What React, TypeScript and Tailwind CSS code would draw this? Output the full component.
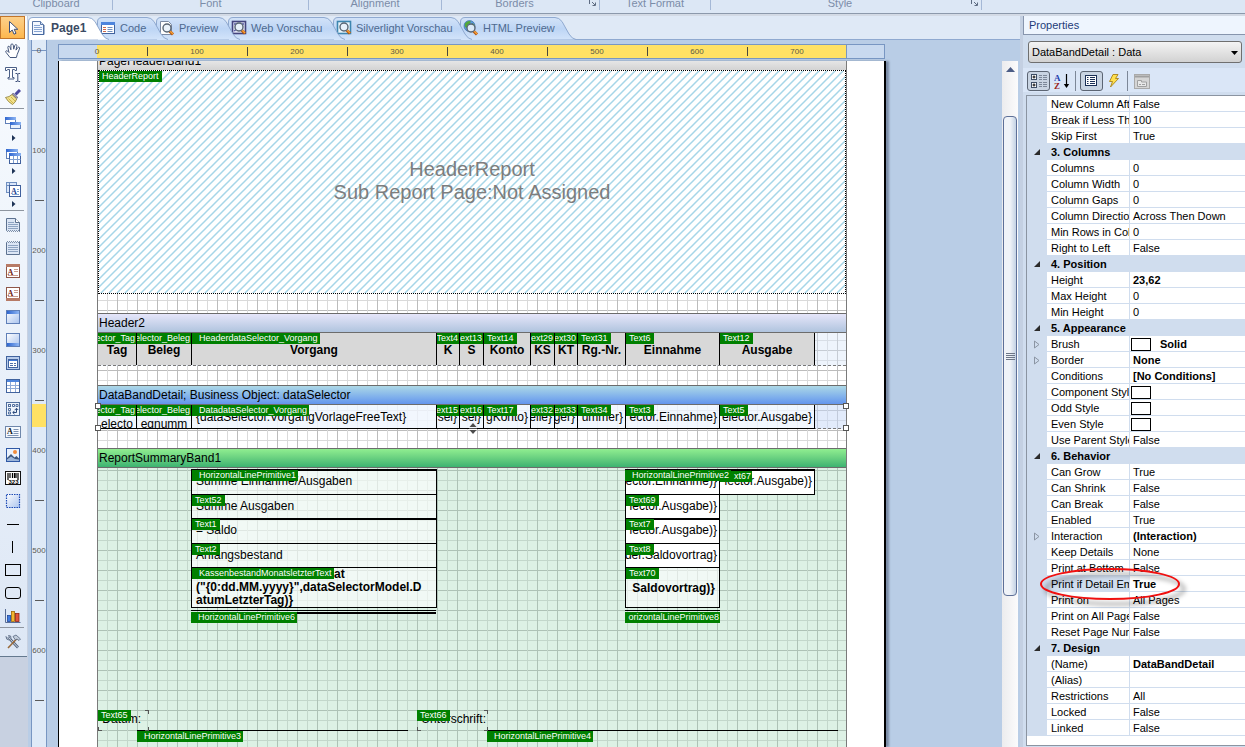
import type { ReactNode } from "react";

/* ---------- icons ---------- */

function Icon({ children, className = "" }: { children: ReactNode; className?: string }) {
  return (
    <svg width="16" height="16" viewBox="0 0 16 16" aria-hidden="true" className={"shrink-0 " + className}>
      {children}
    </svg>
  );
}

const Defs = () => (
  <svg width="0" height="0" className="absolute" aria-hidden="true">
    <defs>
      <linearGradient id="blueTop" x1="0" y1="0" x2="1" y2="1">
        <stop offset="0" stopColor="#ffffff" />
        <stop offset="1" stopColor="#a9c3ee" />
      </linearGradient>
      <linearGradient id="bar" x1="0" y1="0" x2="1" y2="0">
        <stop offset="0" stopColor="#2f66cf" />
        <stop offset="1" stopColor="#8db5f3" />
      </linearGradient>
      <linearGradient id="tabFill" x1="0" y1="0" x2="0" y2="1">
        <stop offset="0" stopColor="#d3e3f8" />
        <stop offset="0.5" stopColor="#bdd5f5" />
        <stop offset="1" stopColor="#d3e4fa" />
      </linearGradient>
    </defs>
  </svg>
);

const Lens = ({ x = 8, y = 7 }: { x?: number; y?: number }) => (
  <g>
    <path d={`M${x + 2.5} ${y + 3} L${x + 6} ${y + 6.5}`} stroke="#b4560c" strokeWidth="3" />
    <path d={`M${x + 3} ${y + 3} L${x + 6} ${y + 6}`} stroke="#f7a13a" strokeWidth="1.4" />
    <circle cx={x} cy={y} r="4" fill="#e9f2fb" fillOpacity="0.9" stroke="#596573" strokeWidth="1.4" />
  </g>
);

const PointerIcon = () => (
  <Icon>
    <path d="M4.500 1.500v11l2.700-2.500 1.800 4.200 2-.9-1.800-4h3.600z" fill="#fff" stroke="#3d4f78" />
  </Icon>
);
const HandIcon = () => (
  <Icon>
    <path
      d="M5 14.500 1 9.300q-.8-1.300.5-1.600 1.200 0 2.500 1.800L2.800 4.300q0-1.300 1.200-1.100.9.300 1.900 3.600L5.900 2q.2-1.200 1.200-1.100 1 .2 1.200 1.300l.4 4L9.900 2.300q.5-1 1.400-.700.8.500.5 1.700l-.8 3.800 1.800-2.500q.8-.8 1.500-.3.6.6.1 1.700L12.200 11.500l-.8 3z"
      fill="#fff"
      stroke="#46587c"
    />
  </Icon>
);
const TextToolIcon = () => (
  <Icon>
    <path d="M.5 1.500h11v3h-1.500l-.5-1H7.500v8h1.500v1.500h-6v-1.500H4.500v-8H2.500l-.5 1H.5z" fill="#fff" stroke="#4b5f86" />
    <path d="M10.500 7.500h1.500l.8.600.8-.600h1.500M12.800 8v7M10.500 15.500h1.500l.8-.6.8.6h1.500" fill="none" stroke="#3d4f78" />
  </Icon>
);
const BrushIcon = () => (
  <Icon>
    <path d="M15 1 10.500 5.500" stroke="#4c4a9e" strokeWidth="3" />
    <path d="m8 4 5 4.500-1.300 1L7 5.500z" fill="#9a98b8" stroke="#5a5878" strokeWidth=".6" />
    <path d="M7 5.500 11.700 10Q10.500 13.500 7.500 15.500 3 13 .5 8.500 4.500 8 7 5.500z" fill="#f2e28c" stroke="#8b7a2e" strokeWidth=".8" />
    <path d="M3.500 9.500 8 14M6 8l4 4" stroke="#c8a93c" strokeWidth=".8" />
  </Icon>
);
const BandsIcon = () => (
  <Icon>
    <rect x=".5" y="2.500" width="10" height="6" fill="#fff" stroke="#5f7fb8" />
    <rect x="0" y="2" width="11" height="3" fill="url(#bar)" />
    <rect x="5.500" y="7.500" width="10" height="6" fill="#e8f0fc" stroke="#5f7fb8" />
    <rect x="5" y="7" width="11" height="3" fill="url(#bar)" />
  </Icon>
);
const CrossIcon = () => (
  <Icon>
    <rect x="1.500" y="1.500" width="11" height="9" fill="#fff" stroke="#5f7fb8" />
    <rect x="1" y="1" width="12" height="3" fill="url(#bar)" />
    <rect x="4.500" y="5.500" width="11" height="10" fill="#fff" stroke="#3f5f9c" />
    <rect x="4" y="5" width="12" height="3" fill="url(#bar)" />
    <path d="M4.500 11.500h11M8.500 8v7M12.500 8v7" stroke="#7f9fd0" />
  </Icon>
);
const ComponentsIcon = () => (
  <Icon>
    <rect x="1.500" y="1.500" width="10" height="10" fill="#dbe7fa" stroke="#6f8fc0" />
    <path d="M1.500 4.500h10M4.500 1.500v10" stroke="#6f8fc0" />
    <rect x="4.500" y="4.500" width="11" height="11" fill="#fff" stroke="#3f5f9c" />
    <text x="6" y="12.500" fontSize="8" fontWeight="700" fontFamily="Liberation Serif, serif" fill="#1f3f8f">A</text>
    <path d="M12 8.500h2M12 10.500h2M7 13.500h7" stroke="#7f9fd0" />
  </Icon>
);
const ReportTitleIcon = () => (
  <Icon>
    <path d="M1.500 1.500h9l4 4v9l-1-1-1 1-1-1-1 1-1-1-1 1-1-1-1 1-1-1-1 1-1-1-1 1-1-1z" fill="#dce6f5" stroke="#5d7290" />
    <path d="M10.500 1.500v4h4" fill="#fff" stroke="#5d7290" />
    <path d="M3 5.500h6M3 7.500h10M3 9.500h10M3 11.500h10" stroke="#8ea4c2" />
  </Icon>
);
const SummaryIcon = () => (
  <Icon>
    <path d="M1.500 2.500l1-1 1 1 1-1 1 1 1-1 1 1 1-1 1 1 1-1 1 1 1-1 1 1 1-1v13h-13z" fill="#dce6f5" stroke="#5d7290" />
    <path d="M3 5.500h10M3 7.500h10M3 9.500h10M3 11.500h10" stroke="#8ea4c2" />
  </Icon>
);
const PageBandIcon = ({ bottom = false }: { bottom?: boolean }) => (
  <Icon>
    <rect x="1.500" y="1.500" width="13" height="13" fill="#fff" stroke="#8f5648" />
    <rect x="1" y={bottom ? 12 : 1} width="14" height="3" fill="#b77a66" />
    <g transform={bottom ? "translate(0,-2)" : undefined}>
      <text x="2.500" y="12" fontSize="8" fontWeight="700" fontFamily="Liberation Serif, serif" fill="#6d2010">A</text>
      <path d="M9 6.500h4M9 8.500h4M3 12.500h10" stroke="#c99c8e" />
    </g>
  </Icon>
);
const HeaderBandIcon = ({ bottom = false }: { bottom?: boolean }) => (
  <Icon>
    <rect x="1.500" y="1.500" width="13" height="13" fill="url(#blueTop)" stroke="#5f7fb8" />
    <rect x="2" y={bottom ? 11 : 2} width="12" height="3" fill="url(#bar)" />
  </Icon>
);
const DataBandIcon = () => (
  <Icon>
    <rect x="1.500" y="1.500" width="13" height="13" fill="#b8ccec" stroke="#41639e" />
    <rect x="3.500" y="4.500" width="9" height="8" fill="#fff" stroke="#41639e" />
    <path d="M4 5.500h8" stroke="#3e78d8" />
    <path d="M5 8.500h3M9 8.500h2M5 10.500h3M9 10.500h2" stroke="#4f6fa8" />
  </Icon>
);
const TableIcon = () => (
  <Icon>
    <rect x="1.500" y="1.500" width="13" height="13" fill="#fff" stroke="#41639e" />
    <rect x="2" y="2" width="12" height="2" fill="#4e85dd" />
    <path d="M2 7.500h12M2 10.500h12M5.500 4v10M10.500 4v10" stroke="#8fabd8" />
  </Icon>
);
const CrossTabIcon = () => (
  <Icon>
    <rect x="1.500" y="1.500" width="13" height="13" fill="#edf3fb" stroke="#516f9e" />
    <rect x="3.500" y="3.500" width="2" height="2" fill="#fff" stroke="#516f9e" />
    <path d="M7.500 3.500h2v2h-2zM11 3.500h2v2h-2zM3.500 7.500h2v2h-2zM3.500 11h2v2h-2z" fill="#fff" stroke="#516f9e" />
    <path d="M8 11.500h3.500V7.500M9.800 9 11.500 7.300 13.200 9M9.500 9.800 7.800 11.500l1.700 1.700" fill="none" stroke="#2c4a7c" />
  </Icon>
);
const TextIcon = () => (
  <Icon>
    <rect x=".5" y="2.500" width="15" height="11" fill="#f6f9fe" stroke="#6f87ab" />
    <text x="2" y="9.500" fontSize="8" fontWeight="700" fontFamily="Liberation Serif, serif" fill="#111">A</text>
    <path d="M8.500 5.500h5M8.500 7.500h5M2.500 11.500h11M8.500 9.500h5" stroke="#7e93b3" />
  </Icon>
);
const ImageIcon = () => (
  <Icon>
    <rect x="1.500" y="1.500" width="13" height="13" fill="#eaf2fd" stroke="#2f58a5" />
    <circle cx="10" cy="5" r="2" fill="#f28c3a" />
    <path d="M2 11 6 7l3.500 3.500L11.500 9 14 11.500V14H2z" fill="#3c567c" />
    <path d="M2 14v-1.500l4-3 4 2.500 4 .5V14z" fill="#9db6da" />
  </Icon>
);
const BarcodeIcon = () => (
  <Icon>
    <rect x=".5" y="1.500" width="15" height="13" fill="#fff" stroke="#111" />
    <path d="M3 3v7M5 3v5M7.500 3v5M9.500 3v5M11 3v5M13 3v7" stroke="#000" strokeWidth="1.200" />
    <text x="3.500" y="13.500" fontSize="6" fontWeight="700" fontFamily="Liberation Sans, sans-serif" fill="#000">323</text>
  </Icon>
);
const PanelIcon = () => (
  <Icon>
    <rect x="1" y="1" width="14" height="14" fill="url(#blueTop)" />
    <rect x="1.500" y="1.500" width="13" height="13" fill="none" stroke="#1d4bb5" strokeDasharray="1.500 1" strokeWidth="1.200" />
  </Icon>
);
const HLineIcon = () => (
  <Icon><path d="M2 8.500h12" stroke="#000" /></Icon>
);
const VLineIcon = () => (
  <Icon><path d="M7.500 2v12" stroke="#000" /></Icon>
);
const RectIcon = ({ round = false }: { round?: boolean }) => (
  <Icon><rect x=".5" y="2.500" width="15" height="11" rx={round ? 2.5 : 0} fill="none" stroke="#000" /></Icon>
);
const ChartIcon = () => (
  <Icon>
    <path d="M.5 1v13.500h15" stroke="#5a6e96" fill="none" />
    <rect x="2.500" y="7.500" width="3" height="6" fill="#3f7be0" stroke="#1d469a" strokeWidth=".8" />
    <rect x="6.500" y="3.500" width="3" height="10" fill="#f5b62e" stroke="#a06a08" strokeWidth=".8" />
    <rect x="10.500" y="5.500" width="3.500" height="8" fill="#e2553b" stroke="#8e2413" strokeWidth=".8" />
  </Icon>
);
const ToolsIcon = () => (
  <Icon>
    <path d="M3.500 3.500 13 13.500" stroke="#54657f" strokeWidth="2.600" />
    <path d="M3.500 3.500 13 13.500" stroke="#d8e0ea" strokeWidth="1" />
    <path d="M1 2.500 3 4.500 4.500 3.500 3.500 1.500Q6.500 1 6 4.500L4 6Q1 6 1 2.500z" fill="#c6d0dd" stroke="#54657f" strokeWidth=".8" />
    <path d="M12 4.500 3 14" stroke="#9a6a3a" strokeWidth="1.600" />
    <path d="m8 2.500 3-1.500 4.500 4-1.500 1.500-2-1.500-1.500 1L9 4z" fill="#c3cedc" stroke="#54657f" strokeWidth=".8" />
  </Icon>
);

const PageTabIcon = () => (
  <Icon>
    <path d="M2.500 1.500h8l3 3v10h-11z" fill="#f4f8ff" stroke="#5b78a8" />
    <path d="M10.500 1.500v3h3" fill="#cfdff5" stroke="#5b78a8" />
    <path d="M4 5.500h6M4 7.500h8M4 9.500h8M4 11.500h8" stroke="#88a5d2" />
    <path d="M3 14.500h11V5" stroke="#4668a0" fill="none" />
  </Icon>
);
const CodeTabIcon = () => (
  <Icon>
    <rect x="1.500" y="2.500" width="13" height="11" fill="#fff" stroke="#41639e" />
    <rect x="1" y="2" width="14" height="3" fill="#4e85dd" />
    <path d="M3 7.500h3M3 9.500h3M3 11.500h3" stroke="#d06a4a" />
    <path d="M7.500 7.500h5M7.500 9.500h5M7.500 11.500h5" stroke="#6f8fc0" />
  </Icon>
);
const PreviewTabIcon = () => (
  <Icon>
    <path d="M1.500 1.500h8l3 3v10h-11z" fill="#fff" stroke="#7b8aa3" />
    <Lens x={8} y={8} />
  </Icon>
);
const WebTabIcon = () => (
  <Icon>
    <rect x="1.500" y="1.500" width="13" height="12" fill="#dfe3f4" stroke="#44447e" strokeWidth="1.600" />
    <path d="M3 4h3M11 4h2M3 11l3-2" stroke="#5a5aa5" strokeWidth="1.500" />
    <Lens x={8} y={7} />
  </Icon>
);
const SilverTabIcon = () => (
  <Icon>
    <rect x="1.500" y="1.500" width="13" height="12" fill="#eaf6fc" stroke="#3e86b0" strokeWidth="1.600" />
    <Lens x={8} y={7} />
  </Icon>
);
const HtmlTabIcon = () => (
  <Icon>
    <circle cx="6.500" cy="6" r="5.500" fill="#5b9be0" stroke="#2f5f9d" strokeWidth=".6" />
    <path d="M2 3.500Q5 0 8 1.500 7 4 5 4.500 5 7 3 8 1 6 2 3.500zM9 3l2.500 1.500V7L9 6z" fill="#52a83a" />
    <Lens x={8} y={8} />
  </Icon>
);

/* ---------- ribbon ---------- */

const ribbonGroups = [
  { name: "Clipboard", cls: "w-[113px]", launcher: false },
  { name: "Font", cls: "w-[196px]", launcher: false },
  { name: "Alignment", cls: "w-[133px]", launcher: false },
  { name: "Borders", cls: "w-[158px] pr-3", launcher: true },
  { name: "Text Format", cls: "w-[111px]", launcher: false },
  { name: "Style", cls: "w-[271px] pr-3", launcher: true },
];

function Ribbon() {
  return (
    <header className="h-4 shrink-0 border-b-2 border-[#d3dae5] bg-[#f4f8fd]">
      <div className="flex h-[14px] overflow-hidden border-b border-[#8c99ab] bg-[#dce7f5]">
        {ribbonGroups.map((g) => (
          <div key={g.name} className={"relative h-[10px] shrink-0 border-r border-[#a4b8d6] text-center " + g.cls}>
            <div className="-mt-1 h-[14px] text-[11px] leading-[14px] text-[#7b8ca8]">{g.name}</div>
            {g.launcher && (
              <button aria-label={g.name + " settings"} className="absolute top-0 right-0.5">
                <svg width="9" height="7" viewBox="0 0 9 7" aria-hidden="true">
                  <path d="M1.500 0v4M4 2l3 3M7.500 2.500v3h-3" stroke="#5e6c82" fill="none" />
                </svg>
              </button>
            )}
          </div>
        ))}
      </div>
    </header>
  );
}

/* ---------- left toolbox ---------- */

type Tool = { name: string; icon: ReactNode; more?: boolean; active?: boolean };

const toolGroups: Tool[][] = [
  [
    { name: "Select", icon: <PointerIcon />, active: true },
    { name: "Pan", icon: <HandIcon /> },
    { name: "Edit text", icon: <TextToolIcon /> },
    { name: "Copy style", icon: <BrushIcon /> },
  ],
  [
    { name: "Bands", icon: <BandsIcon />, more: true },
    { name: "Cross bands", icon: <CrossIcon />, more: true },
    { name: "Components", icon: <ComponentsIcon />, more: true },
  ],
  [
    { name: "Report title", icon: <ReportTitleIcon /> },
    { name: "Report summary", icon: <SummaryIcon /> },
    { name: "Page header", icon: <PageBandIcon /> },
    { name: "Page footer", icon: <PageBandIcon bottom /> },
    { name: "Header", icon: <HeaderBandIcon /> },
    { name: "Footer", icon: <HeaderBandIcon bottom /> },
    { name: "Data", icon: <DataBandIcon /> },
    { name: "Table", icon: <TableIcon /> },
    { name: "Cross-tab", icon: <CrossTabIcon /> },
    { name: "Text", icon: <TextIcon /> },
    { name: "Image", icon: <ImageIcon /> },
    { name: "Bar code", icon: <BarcodeIcon /> },
    { name: "Panel", icon: <PanelIcon /> },
    { name: "Horizontal line", icon: <HLineIcon /> },
    { name: "Vertical line", icon: <VLineIcon /> },
    { name: "Rectangle", icon: <RectIcon /> },
    { name: "Rounded rectangle", icon: <RectIcon round /> },
    { name: "Chart", icon: <ChartIcon /> },
  ],
  [{ name: "Settings", icon: <ToolsIcon /> }],
];

function Toolbox() {
  return (
    <aside className="w-7 shrink-0 overflow-hidden bg-[#c8d1e1]">
      <div className="flex w-[27px] flex-col border-b border-[#64798f] bg-linear-to-b from-[#f9fcff] to-[#dde7f5] pb-[3px]">
        {toolGroups.map((group, i) => (
          <div key={i} className={i > 0 ? "mr-[3px] border-t border-[#8e959f] pt-0.5" : ""}>
            {group.map((t) => (
              <div key={t.name}>
                <button
                  aria-label={t.name}
                  className={
                    "flex h-[23px] w-[25px] items-center justify-center " +
                    (t.active ? "border border-[#c2762b] bg-linear-to-b from-[#fcd08a] to-[#fdb74d]" : "")
                  }
                >
                  {t.icon}
                </button>
                {t.more && (
                  <button aria-label={"More " + t.name} className="flex h-[10px] w-[25px] justify-center pt-px pl-0.5">
                    <svg width="4" height="6" viewBox="0 0 4 6" aria-hidden="true">
                      <path d="M0 0v6l3.500-3z" fill="#1d3356" />
                    </svg>
                  </button>
                )}
              </div>
            ))}
          </div>
        ))}
      </div>
    </aside>
  );
}

/* ---------- document tabs ---------- */

const tabs = [
  { name: "Page1", icon: <PageTabIcon />, w: 69, cls: "z-60 w-[69px] pl-0.5 gap-[5px] text-[12px] font-bold text-[#3b4a63]" },
  { name: "Code", icon: <CodeTabIcon />, w: 59, cls: "z-50 w-[59px] pl-[3px] gap-1 text-[11px] text-[#4e6a90]" },
  { name: "Preview", icon: <PreviewTabIcon />, w: 72, cls: "z-40 w-[72px] pl-[3px] gap-1 text-[11px] text-[#4e6a90]" },
  { name: "Web Vorschau", icon: <WebTabIcon />, w: 105, cls: "z-30 w-[105px] pl-[3px] gap-1 text-[11px] text-[#4e6a90]" },
  { name: "Silverlight Vorschau", icon: <SilverTabIcon />, w: 127, cls: "z-20 w-[127px] pl-[3px] gap-1 text-[11px] text-[#4e6a90]" },
  { name: "HTML Preview", icon: <HtmlTabIcon />, w: 104, cls: "z-10 w-[104px] pl-[3px] gap-1 text-[11px] text-[#4e6a90]" },
];

function Tabs() {
  return (
    <nav className="flex h-6 shrink-0 border-b border-[#8fa9d0] bg-[#dfe9f6]" role="tablist">
      {tabs.map((t, i) => (
        <button
          key={t.name}
          role="tab"
          aria-selected={i === 0}
          className={"relative flex h-6 shrink-0 items-center whitespace-nowrap " + t.cls}
        >
          <svg className="absolute top-0 left-0" width={t.w + 14} height="24" aria-hidden="true">
            <path
              d={`M.5 24V6Q.5 1.500 5 1.500H${t.w - 9}Q${t.w - 5} 1.500 ${t.w - 2} 5.500L${t.w + 5} 18Q${t.w + 8} 23 ${t.w + 12} 23.500`}
              fill={i === 0 ? "#ffffff" : "url(#tabFill)"}
              stroke="#8fa9d0"
            />
          </svg>
          <span className="relative flex h-5 w-4 items-center">{t.icon}</span>
          <span className="relative">{t.name}</span>
        </button>
      ))}
    </nav>
  );
}

/* ---------- rulers ---------- */

function HorizontalRuler() {
  return (
    <div className="mt-1 flex h-[15px] w-[827px] shrink-0 border border-[#7896c2] bg-[#c8d9ef]">
      <div className="ml-[38px] flex w-[750px] border-r border-[#7896c2] bg-[#ffe164]">
        {Array.from({ length: 15 }, (_, i) => (
          <div
            key={i}
            className={
              "flex w-[50px] shrink-0 items-center justify-center text-[8px] leading-[13px] text-[#5d5b45] " +
              (i === 0 ? "-ml-[25px]" : "")
            }
          >
            {i % 2 === 0 ? i * 50 : <span className="h-[9px] w-px bg-[#4b4a3c]" />}
          </div>
        ))}
      </div>
    </div>
  );
}

function VerticalRuler() {
  return (
    <div className="relative ml-[3px] w-4 shrink-0 overflow-hidden border-x border-[#7896c2] bg-[#dfeaf7]">
      <div className="absolute top-[364px] left-0 h-[23px] w-full bg-[#ffe164]" />
      <div className="absolute top-[10px] left-0 h-px w-full bg-[#7896c2]" />
      <div className="relative -mt-[15px]">
        {Array.from({ length: 15 }, (_, i) => (
          <div key={i} className="flex h-[50px] items-center justify-center text-[8px] leading-[10px] text-[#5d5b55]">
            {i % 2 === 0 ? <span className="pt-0.5">{i * 50}</span> : <span className="h-px w-[9px] bg-[#5a5a5a]" />}
          </div>
        ))}
      </div>
    </div>
  );
}

/* ---------- report page ---------- */

const columns = [0, 39, 94, 339, 362, 386, 433, 457, 480, 528, 622, 717];

const headerCells = [
  { tag: "ector_Tag", text: "Tag", clip: true },
  { tag: "elector_Beleg", text: "Beleg", clip: true },
  { tag: "HeaderdataSelector_Vorgang", text: "Vorgang", wide: true },
  { tag: "Text4", text: "K", clip: true },
  { tag: "ext13", text: "S", clip: true },
  { tag: "Text14", text: "Konto" },
  { tag: "ext29", text: "KS", clip: true },
  { tag: "ext30", text: "KT", clip: true },
  { tag: "Text31", text: "Rg.-Nr." },
  { tag: "Text6", text: "Einnahme" },
  { tag: "Text12", text: "Ausgabe" },
];

const dataCells = [
  { tag: "ector_Tag", text: "electo", clip: true, low: true },
  { tag: "elector_Beleg", text: "egnumm", clip: true, low: true },
  { tag: "DatadataSelector_Vorgang", text: "{dataSelector.VorgangVorlageFreeText}", wide: true },
  { tag: "ext15", text: "sel}", clip: true },
  { tag: "ext16", text: "sel}", clip: true },
  { tag: "Text17", text: "gKonto}" },
  { tag: "ext32", text: "elle}", clip: true },
  { tag: "ext33", text: "ger}", clip: true },
  { tag: "Text34", text: "ummer}" },
  { tag: "Text3", text: "ector.Einnahme}" },
  { tag: "Text5", text: "elector.Ausgabe}" },
];

function Tag({ children, wide = false, clip = false }: { children: string; wide?: boolean; clip?: boolean }) {
  return (
    <span
      className={
        "absolute top-0 left-0 z-10 flex h-[11px] overflow-hidden bg-[#008000] text-[9px] leading-[11px] font-normal whitespace-nowrap text-white " +
        (clip ? "w-full justify-end pr-px" : wide ? "pr-0.5 pl-[7px]" : "px-[3px]")
      }
    >
      {children}
    </span>
  );
}

function BandTitle({ children, className }: { children: string; className: string }) {
  return (
    <div className={"h-5 border-y border-[#6c6c6c] bg-linear-to-b pl-px text-[12px] leading-[19px] whitespace-nowrap text-black " + className}>
      {children}
    </div>
  );
}

const summaryLeft = [
  { tag: "HorizontalLinePrimitive1", text: "Summe Einnahme/Ausgaben", top: 1, height: 26, wide: true },
  { tag: "Text52", text: "Summe Ausgaben", top: 26, height: 25 },
  { tag: "Text1", text: "= Saldo", top: 50, height: 26 },
  { tag: "Text2", text: "Anfangsbestand", top: 75, height: 25 },
];
const summaryRight = [
  { tag: "", text: "ector.Einnahme)}", top: 1, height: 26 },
  { tag: "Text69", text: "lector.Ausgabe)}", top: 26, height: 25 },
  { tag: "Text7", text: "lector.Ausgabe)}", top: 50, height: 26 },
  { tag: "Text8", text: "der.Saldovortrag}", top: 75, height: 25 },
];
const rules = [
  { left: 93, top: 1, width: 245, height: 2 },
  { left: 527, top: 1, width: 189, height: 2 },
  { left: 93, top: 50, width: 246, height: 2 },
  { left: 527, top: 50, width: 95, height: 2 },
  { left: 93, top: 142, width: 245, height: 1 },
  { left: 93, top: 144, width: 245, height: 2 },
  { left: 527, top: 142, width: 95, height: 1 },
  { left: 39, top: 262, width: 271, height: 1 },
  { left: 389, top: 262, width: 351, height: 1 },
];

function Corners({ className, children }: { className: string; children: ReactNode }) {
  return (
    <div className={"absolute top-[242px] h-[21px] " + className}>
      <span className="absolute top-0 right-0 h-1 w-1 border-t border-r border-[#555]" />
      <span className="absolute bottom-0 left-0 h-1 w-1 border-b border-l border-[#555]" />
      <span className="absolute right-0 bottom-0 h-1 w-1 border-r border-b border-[#555]" />
      {children}
    </div>
  );
}

function ReportPage() {
  return (
    <div className="mt-0.5 min-h-0 w-[828px] flex-1 overflow-hidden border-r-2 border-l border-black bg-white pl-[38px] shadow-[3px_0_2px_#7b8ca6]">
      <div className="relative h-full w-[750px] border-x border-[#7a7a7a] bg-[repeating-linear-gradient(90deg,transparent_0_9px,#dadada_9px_10px,transparent_10px_19px,#bcbcbc_19px_20px),repeating-linear-gradient(180deg,transparent_0_9px,#bcbcbc_9px_10px,transparent_10px_19px,#dadada_19px_20px)]">
        <div className="h-[9px] overflow-hidden bg-linear-to-b from-[#e6e6e6] to-[#d3d3d3]">
          <div className="-mt-[9px] pl-px text-[12px] leading-[18px]">PageHeaderBand1</div>
        </div>

        <div className="relative h-[224px] border border-dotted border-black bg-white">
          <svg width="100%" height="100%" className="absolute inset-0" aria-hidden="true">
            <defs>
              <pattern id="hatch" width="8" height="8" patternUnits="userSpaceOnUse">
                <path d="M-2 2 2-2M-2 10 10-2M6 10 10 6" stroke="#a6d6e8" strokeWidth="1.500" />
              </pattern>
            </defs>
            <rect width="100%" height="100%" fill="url(#hatch)" />
          </svg>
          <Tag>HeaderReport</Tag>
          <div className="relative pt-[87px] text-center text-[20px] leading-[23px] text-[#7d7d7d]">
            <div>HeaderReport</div>
            <div>Sub Report Page:Not Assigned</div>
          </div>
        </div>

        <div className="h-[19px]" />
        <BandTitle className="from-[#e6e6fa] to-[#b0c4de]">Header2</BandTitle>
        <div className="relative h-[33px] border-b border-dashed border-[#777] bg-[#d5e3f8]/40">
          {headerCells.map((c, i) => (
            <div
              key={c.tag}
              className="absolute top-0 h-8 overflow-hidden border-r border-black bg-[#d8d8d8]"
              style={{ left: columns[i], width: columns[i + 1] - columns[i] }}
            >
              <Tag clip={c.clip} wide={c.wide}>{c.tag}</Tag>
              <div className="pt-[9px] text-center text-[12px] leading-4 font-bold whitespace-nowrap">{c.text}</div>
            </div>
          ))}
        </div>

        <div className="h-[19px]" />
        <BandTitle className="from-[#add8e6] to-[#6495ed]">DataBandDetail; Business Object: dataSelector</BandTitle>
        <div className="relative h-6 border-b border-dashed border-[#777] bg-[#c5d7f8]/50">
          {dataCells.map((c, i) => (
            <div
              key={i}
              className="absolute top-0 h-6 overflow-hidden border-r border-b border-black bg-[#fafcff]/70"
              style={{ left: columns[i], width: columns[i + 1] - columns[i] }}
            >
              <Tag clip={c.clip} wide={c.wide}>{c.tag}</Tag>
              <div
                className={
                  "flex text-[12px] leading-4 whitespace-nowrap " +
                  (c.wide ? "pt-1 pl-1" : c.low ? "justify-center pt-[11px]" : "justify-end pt-1 pr-0.5")
                }
              >
                {c.text}
              </div>
            </div>
          ))}
          <span className="absolute -top-0.5 -left-[3px] z-20 h-[6px] w-[6px] border border-[#555] bg-white" />
          <span className="absolute -bottom-[3px] -left-[3px] z-20 h-[6px] w-[6px] border border-[#555] bg-white" />
          <span className="absolute -top-0.5 -right-[3px] z-20 h-[6px] w-[6px] border border-[#555] bg-white" />
          <span className="absolute -right-[3px] -bottom-[3px] z-20 h-[6px] w-[6px] border border-[#555] bg-white" />
          <svg className="absolute -bottom-[6px] left-[371px] z-20" width="8" height="11" viewBox="0 0 8 11" aria-hidden="true">
            <path d="M4 0 7.500 4h-7zM4 11 .5 7h7zM0 5h8v1H0z" fill="#4c4c4c" />
          </svg>
        </div>

        <div className="h-[19px]" />
        <BandTitle className="from-[#90ee90] to-[#3cb371]">ReportSummaryBand1</BandTitle>
        <div className="relative h-[300px] bg-[#8dd0a9]/30">
          {summaryLeft.map((c) => (
            <div
              key={c.tag}
              className="absolute left-[93px] w-[246px] overflow-hidden border border-black bg-white/60"
              style={{ top: c.top, height: c.height }}
            >
              <Tag wide={c.wide}>{c.tag}</Tag>
              <div className="pt-[3px] pl-1 text-[12px] leading-4 whitespace-nowrap">{c.text}</div>
            </div>
          ))}
          <div className="absolute top-[99px] left-[93px] h-[41px] w-[246px] overflow-hidden border border-black bg-white/60 pl-1 text-[12px] leading-[13px] font-bold">
            <Tag wide>KassenbestandMonatsletzterText</Tag>
            <div className="pl-[138px]">at</div>
            <div>("{"{0:dd.MM.yyyy}"}",dataSelectorModel.D</div>
            <div>atumLetzterTag)&#125;</div>
          </div>

          {summaryRight.map((c) => (
            <div
              key={c.top}
              className="absolute left-[527px] w-[95px] overflow-hidden border border-black bg-white"
              style={{ top: c.top, height: c.height }}
            >
              {c.tag && <Tag>{c.tag}</Tag>}
              <div className="flex justify-end pt-[3px] pr-0.5 text-[12px] leading-4 whitespace-nowrap">{c.text}</div>
            </div>
          ))}
          <div className="absolute top-px left-[621px] h-[26px] w-24 overflow-hidden border border-black bg-white">
            <div className="flex justify-end pt-[3px] pr-0.5 text-[12px] leading-4 whitespace-nowrap">lector.Ausgabe)&#125;</div>
          </div>
          <div className="absolute top-[3px] left-[622px] h-3 w-8"><Tag clip>xt67</Tag></div>
          <div className="absolute top-0.5 left-[527px] h-3 w-[107px]"><Tag wide>HorizontalLinePrimitive2</Tag></div>
          <div className="absolute top-[99px] left-[527px] h-[41px] w-[95px] overflow-hidden border border-black bg-white/60">
            <Tag>Text70</Tag>
            <div className="flex justify-end pt-3 pr-1 text-[12px] leading-4 font-bold whitespace-nowrap">Saldovortrag)&#125;</div>
          </div>

          {rules.map((r, i) => (
            <div key={i} className="absolute bg-black" style={r} />
          ))}
          <div className="absolute top-36 left-[93px] h-3 w-[107px]"><Tag wide>HorizontalLinePrimitive6</Tag></div>
          <div className="absolute top-36 left-[527px] h-3 w-[95px]"><Tag clip>orizontalLinePrimitive8</Tag></div>

          <Corners className="left-0 w-[51px]">
            <Tag>Text65</Tag>
            <div className="flex justify-end pt-px pr-2 text-[12px] leading-4">Datum:</div>
          </Corners>
          <Corners className="left-[319px] w-[71px]">
            <Tag>Text66</Tag>
            <div className="flex justify-end pt-px pr-0.5 text-[12px] leading-4">Unterschrift:</div>
          </Corners>
          <div className="absolute top-[263px] left-[39px] h-3"><Tag wide>HorizontalLinePrimitive3</Tag></div>
          <div className="absolute top-[263px] left-[389px] h-3"><Tag wide>HorizontalLinePrimitive4</Tag></div>
        </div>
      </div>
    </div>
  );
}

function ScrollBar() {
  return (
    <div className="mt-[21px] mr-0.5 flex w-4 shrink-0 flex-col bg-linear-to-r from-[#ececee] to-[#fbfbfc]">
      <button aria-label="Scroll up" className="flex h-[55px] justify-center pt-1.5">
        <svg width="9" height="5" viewBox="0 0 9 5" aria-hidden="true">
          <path d="M4.500 0 9 5H0z" fill="#4b5c85" />
        </svg>
      </button>
      <div className="mx-px flex h-[480px] flex-col items-center justify-center gap-px rounded-sm border border-[#5e7098] bg-linear-to-r from-[#f0f3f8] from-50% to-[#c3d2e4]">
        <span className="h-px w-[9px] bg-[#6d7788]" />
        <span className="h-px w-[9px] bg-[#6d7788]" />
        <span className="h-px w-[9px] bg-[#6d7788]" />
        <span className="h-px w-[9px] bg-[#6d7788]" />
      </div>
    </div>
  );
}

/* ---------- properties ---------- */

type Row = { name: string; value?: string; bold?: boolean; swatch?: boolean; expand?: boolean; category?: boolean; selected?: boolean };

const rows: Row[] = [
  { name: "New Column After", value: "False" },
  { name: "Break if Less Than", value: "100" },
  { name: "Skip First", value: "True" },
  { name: "3. Columns", category: true },
  { name: "Columns", value: "0" },
  { name: "Column Width", value: "0" },
  { name: "Column Gaps", value: "0" },
  { name: "Column Direction", value: "Across Then Down" },
  { name: "Min Rows in Column", value: "0" },
  { name: "Right to Left", value: "False" },
  { name: "4. Position", category: true },
  { name: "Height", value: "23,62", bold: true },
  { name: "Max Height", value: "0" },
  { name: "Min Height", value: "0" },
  { name: "5. Appearance", category: true },
  { name: "Brush", value: "Solid", bold: true, swatch: true, expand: true },
  { name: "Border", value: "None", bold: true, expand: true },
  { name: "Conditions", value: "[No Conditions]", bold: true },
  { name: "Component Style", swatch: true },
  { name: "Odd Style", swatch: true },
  { name: "Even Style", swatch: true },
  { name: "Use Parent Styles", value: "False" },
  { name: "6. Behavior", category: true },
  { name: "Can Grow", value: "True" },
  { name: "Can Shrink", value: "False" },
  { name: "Can Break", value: "False" },
  { name: "Enabled", value: "True" },
  { name: "Interaction", value: "(Interaction)", bold: true, expand: true },
  { name: "Keep Details", value: "None" },
  { name: "Print at Bottom", value: "False" },
  { name: "Print if Detail Empty", value: "True", bold: true, selected: true },
  { name: "Print on", value: "All Pages" },
  { name: "Print on All Pages", value: "False" },
  { name: "Reset Page Number", value: "False" },
  { name: "7. Design", category: true },
  { name: "(Name)", value: "DataBandDetail", bold: true },
  { name: "(Alias)" },
  { name: "Restrictions", value: "All" },
  { name: "Locked", value: "False" },
  { name: "Linked", value: "False" },
];

function PropertyRow({ row }: { row: Row }) {
  if (row.category) {
    return (
      <tr className="h-4 bg-[#d0ddee]">
        <td className="p-0">
          <svg className="mx-auto" width="6" height="6" viewBox="0 0 6 6" aria-hidden="true">
            <path d="M6 0v6H0z" fill="#2b2b2b" />
          </svg>
        </td>
        <th colSpan={2} scope="rowgroup" className="p-0 pl-1 text-left font-bold">{row.name}</th>
      </tr>
    );
  }
  return (
    <tr className="h-4">
      <td className="relative bg-[#d0ddee] p-0">
        {row.expand && (
          <svg className="mx-auto" width="6" height="9" viewBox="0 0 6 9" aria-hidden="true">
            <path d="M.5 1v7l4.500-3.500z" fill="none" stroke="#8b95a3" />
          </svg>
        )}
        {row.selected && (
          <svg className="absolute -top-[11px] left-3 z-10" width="158" height="44" viewBox="0 0 158 44" aria-hidden="true">
            <ellipse cx="72" cy="20" rx="69" ry="15" fill="none" stroke="#000" strokeOpacity="0.25" strokeWidth="4" className="translate-x-1 translate-y-1 blur-[2px]" />
            <ellipse cx="71" cy="19" rx="69" ry="15" fill="none" stroke="#f01010" strokeWidth="2" />
          </svg>
        )}
      </td>
      <th
        scope="row"
        className={
          "overflow-hidden border-r border-b border-[#d0ddee] p-0 pt-px pl-1 text-left leading-[14px] font-normal whitespace-nowrap " +
          (row.selected ? "bg-[#d0ddee]" : "")
        }
      >
        {row.name}
      </th>
      <td className={"overflow-hidden border-b border-[#d0ddee] p-0 pt-px leading-[14px] whitespace-nowrap " + (row.bold ? "font-bold" : "")}>
        <div className="flex items-center">
          {row.swatch && <span className="mr-1.5 ml-px h-[13px] w-5 border border-black bg-white" />}
          <span className="pl-[3px]">{row.value}</span>
        </div>
      </td>
    </tr>
  );
}

const pressed = "rounded-[3px] border border-[#5c6573] bg-[#c9d4e2]";

function Properties() {
  return (
    <aside className="flex w-[225px] shrink-0 flex-col border-l-[3px] border-[#c4d0e2] bg-[#d0ddee] text-[11px] text-black">
      <h2 className="h-[19px] shrink-0 border-b border-l border-[#8795ad] bg-[#eef5fe] pl-[5px] text-[11px] leading-[18px] text-[#1e3c78]">
        Properties
      </h2>
      <div className="relative mt-1.5 mr-[3px] ml-[5px] h-[22px] shrink-0">
        <label htmlFor="component" className="sr-only">Component</label>
        <select
          id="component"
          className="h-[22px] w-full appearance-none rounded-[3px] border border-[#6f6f6f] bg-linear-to-b from-[#f4f4f4] to-[#d2d2d2] px-[3px] text-[11px]"
        >
          <option>DataBandDetail : Data</option>
        </select>
        <svg className="pointer-events-none absolute top-[10px] right-1" width="7" height="4" viewBox="0 0 7 4" aria-hidden="true">
          <path d="M0 0h7L3.500 4z" fill="#000" />
        </svg>
      </div>
      <div className="mt-[5px] flex h-6 shrink-0 items-center bg-[#dae6f7] pt-0.5 pl-1">
        <button aria-label="Categorized" className={"flex h-5 w-[23px] items-center justify-center " + pressed}>
          <svg width="18" height="16" viewBox="0 0 18 16" aria-hidden="true">
            <rect x="1.500" y="1.500" width="5" height="5" fill="#fff" stroke="#3e4e66" />
            <rect x="1.500" y="9.500" width="5" height="5" fill="#fff" stroke="#3e4e66" />
            <path d="M4 2.500v3M2.500 4h3M4 10.500v3M2.500 12h3" stroke="#000" />
            <path d="M9 2.500h3M13 2.500h4M9 4.500h3M13 4.500h4M9 6.500h3M13 6.500h4M9 9.500h3M13 9.500h4M9 11.500h3M13 11.500h4M9 13.500h3M13 13.500h4" stroke="#7c8798" />
          </svg>
        </button>
        <button aria-label="Alphabetical" className="flex h-5 w-6 items-center justify-center">
          <svg width="16" height="16" viewBox="0 0 16 16" aria-hidden="true">
            <text x="0" y="7.500" fontSize="9" fontWeight="700" fontFamily="Liberation Serif, serif" fill="#1f3fae">A</text>
            <text x="0" y="15.500" fontSize="9" fontWeight="700" fontFamily="Liberation Serif, serif" fill="#9b1f1f">Z</text>
            <path d="M12.500 1v12" stroke="#000" strokeWidth="1.200" />
            <path d="M9.800 11h5.400l-2.700 4z" fill="#000" />
          </svg>
        </button>
        <span className="mr-1 ml-px h-5 w-px bg-[#7c8798]" />
        <button aria-label="Properties" className={"flex h-5 w-[23px] items-center justify-center " + pressed}>
          <svg width="13" height="12" viewBox="0 0 13 12" aria-hidden="true">
            <rect x=".5" y=".5" width="11" height="10" fill="#fff" stroke="#1b2f55" />
            <path d="M2 2.500h1.500M5 2.500h5M2 4.500h1.500M5 4.500h5M2 6.500h1.500M5 6.500h5M2 8.500h1.500M5 8.500h5" stroke="#1b2f55" />
          </svg>
        </button>
        <button aria-label="Events" className="flex h-5 w-[21px] items-center justify-center">
          <svg width="12" height="14" viewBox="0 0 12 14" aria-hidden="true">
            <path d="M5 .5h5L7.500 4.500h3L2.500 13l2-5.500H1.500z" fill="#ffe04d" stroke="#a8821a" strokeWidth=".9" />
          </svg>
        </button>
        <span className="mr-1.5 ml-[3px] h-5 w-px bg-[#7c8798]" />
        <button aria-label="Property pages" disabled className="flex h-5 w-4 items-center justify-center">
          <svg width="16" height="15" viewBox="0 0 16 15" aria-hidden="true">
            <rect x=".5" y=".5" width="15" height="14" fill="#d5d5d5" stroke="#a9a9a9" />
            <path d="M1 2.500h14" stroke="#a0a0a0" strokeWidth="2" />
            <path d="M3.500 6.500h4v1.500h5v4.500h-9z" fill="#e8e8e8" stroke="#a0a0a0" />
            <path d="M5 10.500h2M8 10.500h3" stroke="#a0a0a0" />
          </svg>
        </button>
      </div>
      <div className="mt-[3px] mb-px ml-[3px] min-h-0 flex-1 overflow-hidden border-t border-b border-l border-[#8b94a1] bg-white">
        <table className="w-full table-fixed border-separate border-spacing-0 text-[11px] leading-[15px]">
          <colgroup>
            <col className="w-5" />
            <col className="w-[83px]" />
            <col />
          </colgroup>
          <tbody>
            {rows.map((r) => (
              <PropertyRow key={r.name} row={r} />
            ))}
          </tbody>
        </table>
      </div>
    </aside>
  );
}

/* ---------- app ---------- */

export default function App() {
  return (
    <div className="flex h-screen flex-col overflow-hidden bg-[#c4d0e2] font-['Liberation_Sans',Arial,sans-serif]">
      <Defs />
      <Ribbon />
      <div className="flex min-h-0 flex-1">
        <Toolbox />
        <main className="flex min-w-0 flex-1 flex-col">
          <Tabs />
          <div className="flex min-h-0 flex-1 overflow-hidden bg-[#b9cde6]">
            <VerticalRuler />
            <div className="flex min-w-0 flex-1 flex-col pl-[11px]">
              <HorizontalRuler />
              <ReportPage />
            </div>
            <ScrollBar />
          </div>
        </main>
        <Properties />
      </div>
    </div>
  );
}
